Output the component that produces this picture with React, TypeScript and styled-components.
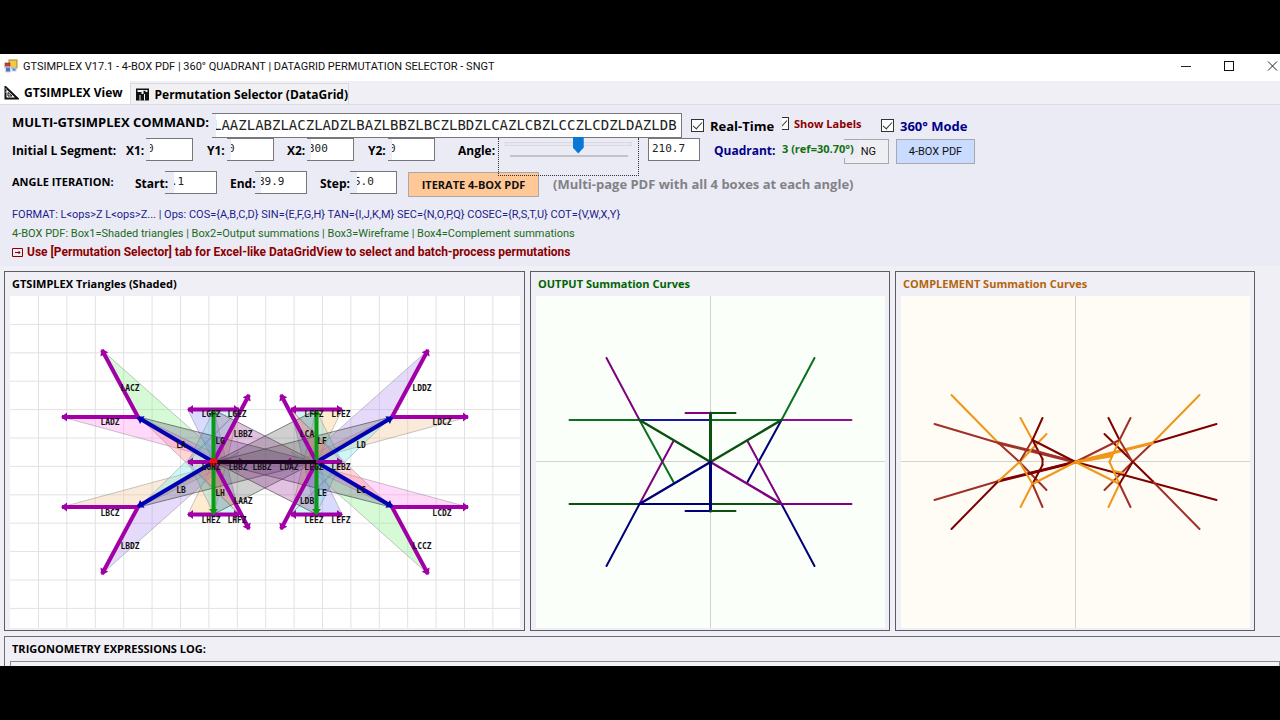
import React from "react";
import styled, { createGlobalStyle } from "styled-components";

const sans = `"Open Sans", "Noto Sans", sans-serif`;
const narrow = `Roboto, "Open Sans", sans-serif`;
const mono = `"DejaVu Sans Mono", "Liberation Mono", monospace`;
const panelBg = "#ebebf5";

const Global = createGlobalStyle`
  * { box-sizing: border-box; }
  body { margin: 0; background: #000; font-family: ${sans}; color: #000; }
  h1, h2, p { margin: 0; font-weight: inherit; font-size: inherit; }
`;

const Stage = styled.div`
  height: 100vh;
  padding: 54px 0;
  display: flex;
  overflow: hidden;
`;
const AppWindow = styled.main`
  flex: 1;
  min-width: 0;
  display: flex;
  flex-direction: column;
  background: #f0eff6;
  overflow: hidden;
  white-space: nowrap;
`;
const TitleBar = styled.header`
  flex: none;
  height: 27px;
  display: flex;
  align-items: center;
  gap: 5px;
  padding: 0 0 3px 4px;
  background: #fff;
  font: 11px ${narrow};
`;
const Title = styled.h1`
  flex: 1;
  color: #111;
`;
const WindowButtons = styled.div`
  display: flex;
  gap: 27px;
`;
const WindowButton = styled.button`
  width: 16px;
  height: 16px;
  padding: 0;
  border: 0;
  background: none;
  display: block;
`;
const Tabs = styled.nav`
  flex: none;
  height: 24px;
  display: flex;
  align-items: flex-end;
  border-bottom: 1px solid #dcdce2;
`;
const Tab = styled.button<{ $active?: boolean }>`
  height: ${(p) => (p.$active ? 23 : 21)}px;
  display: flex;
  align-items: center;
  gap: 5px;
  padding: 0 ${(p) => (p.$active ? 7 : 0)}px 0 4px;
  border: solid #dcdce0;
  border-width: ${(p) => (p.$active ? "0" : "1px 1px 0")};
  background: ${(p) => (p.$active ? "#fff" : "#f1f1f3")};
  font: bold 12px ${sans};
  color: #000;
`;
const Controls = styled.section`
  flex: none;
  padding: 0 0 4px 12px;
  background: ${panelBg};
`;
const Row = styled.div<{ $cols: string }>`
  height: 33px;
  display: grid;
  grid-template-columns: ${(p) => p.$cols};
  align-items: start;
`;
const Label = styled.label<{ $color?: string; $small?: boolean }>`
  position: relative;
  z-index: 1;
  font-weight: bold;
  font-size: ${(p) => (p.$small ? 11 : 12)}px;
  line-height: ${(p) => (p.$small ? 22 : 26)}px;
  color: ${(p) => p.$color || "#000"};
`;
const CommandLabel = styled(Label)`
  font-size: 13px;
  align-self: center;
`;
const Note = styled.span`
  font-weight: bold;
  font-size: 13px;
  line-height: 26px;
  color: #828286;
`;
const TextInput = styled.input<{ $cut?: number; $whole?: boolean }>`
  width: 100%;
  height: 23px;
  padding: 0 0 2px ${(p) => p.$cut || 3}px;
  border: 1px solid #77777b;
  border-left-width: ${(p) => (p.$whole ? 1 : 0)}px;
  border-radius: 0;
  outline: 0;
  background: linear-gradient(
    to right,
    ${panelBg} ${(p) => p.$cut || 0}px,
    #fff ${(p) => p.$cut || 0}px
  );
  text-indent: ${(p) => (p.$cut ? -3 : 0)}px;
  font: 11px ${mono};
  color: #222;
`;
const CommandInput = styled(TextInput)`
  align-self: end;
  height: 25px;
  padding-bottom: 2px;
  font-size: 14px;
`;
const Check = styled.label<{ $color?: string; $small?: boolean }>`
  height: ${(p) => (p.$small ? 29 : 25)}px;
  align-self: end;
  display: flex;
  align-items: center;
  gap: ${(p) => (p.$small ? 5 : 6)}px;
  font-weight: bold;
  font-size: ${(p) => (p.$small ? 11 : 13)}px;
  color: ${(p) => p.$color || "#000"};
`;
const Box = styled.input<{ $narrow?: boolean }>`
  appearance: none;
  flex: none;
  width: ${(p) => (p.$narrow ? 7 : 13)}px;
  height: 13px;
  margin: 0;
  border: 1px solid #333;
  border-left-width: ${(p) => (p.$narrow ? 0 : 1)}px;
  background: #fff;
  display: flex;
  justify-content: flex-end;
  overflow: hidden;
  &:checked::after {
    content: "";
    flex: none;
    width: 4px;
    height: 8px;
    margin-right: 3px;
    border: solid #333;
    border-width: 0 1px 1px 0;
    transform: rotate(42deg);
  }
`;
const Button = styled.button<{ $bg: string; $bold?: boolean }>`
  width: 100%;
  height: 25px;
  margin-top: 1px;
  padding: 0;
  border: 1px solid #a9a9ad;
  background: ${(p) => p.$bg};
  font: ${(p) => (p.$bold ? `bold 11px ${sans}` : `11px ${narrow}`)};
  color: #111;
`;
const NgButton = styled(Button)`
  padding-right: 12px;
  text-align: right;
`;
const QuadrantValue = styled.output`
  position: relative;
  z-index: 1;
  justify-self: start;
  width: 76px;
  margin-top: 2px;
  background: ${panelBg};
  font-weight: bold;
  font-size: 11px;
  line-height: 18px;
  color: #117011;
`;
const SliderBox = styled.div`
  position: relative;
  z-index: 1;
  height: 38px;
  padding: 0 6px;
  border: 1px dotted #333;
  border-top: 0;
  display: flex;
  flex-direction: column;
  align-items: center;
`;
const Slider = styled.input`
  appearance: none;
  width: 100%;
  height: 16px;
  margin: 0;
  background: none;
  &::-webkit-slider-runnable-track {
    height: 4px;
    margin-bottom: 5px;
    border: 1px solid #d9d9df;
    background: #e8e8ee;
  }
  &::-webkit-slider-thumb {
    appearance: none;
    width: 11px;
    height: 17px;
    margin-top: -6px;
    background: #0a76d6;
    clip-path: polygon(0 0, 100% 0, 100% 65%, 50% 100%, 0 65%);
  }
`;
const Ticks = styled.div`
  width: 118px;
  height: 2px;
  margin-top: 1px;
  background: #c2c2c8;
`;
const HelpLines = styled.div`
  padding-top: 1px;
`;
const Help = styled.p<{ $color: string; $bold?: boolean }>`
  display: flex;
  align-items: center;
  gap: 4px;
  font-family: ${narrow};
  font-size: ${(p) => (p.$bold ? 12 : 11)}px;
  line-height: 19px;
  font-weight: ${(p) => (p.$bold ? "bold" : "normal")};
  color: ${(p) => p.$color};
`;
const Panels = styled.section`
  flex: none;
  display: grid;
  grid-template-columns: 521fr 360fr 360fr;
  gap: 5px;
  padding: 5px 25px 5px 4px;
`;
const Panel = styled.article`
  min-width: 0;
  padding: 0 4px 2px 5px;
  border: 1px solid #5c5c64;
`;
const PanelTitle = styled.h2<{ $color?: string }>`
  display: block;
  padding-left: 2px;
  font-weight: bold;
  font-size: 11px;
  line-height: 24px;
  color: ${(p) => p.$color || "#000"};
`;
const Canvas = styled.svg<{ $bg: string }>`
  display: block;
  width: 100%;
  height: 332px;
  background: ${(p) => p.$bg};
`;
const Log = styled.section`
  flex: none;
  margin-left: 4px;
  padding: 0 0 0 5px;
  border: solid #6c6c74;
  border-width: 1px 0 0 1px;
`;
const LogText = styled.textarea`
  display: block;
  width: 100%;
  height: 60px;
  border: 1px solid #8a8a90;
  border-radius: 0;
  background: #f3f3f5;
  resize: none;
`;

type Seg = [number, number, number, number, string, number?];

const Segs = ({ items }: { items: Seg[] }) => (
  <>
    {items.map(([x1, y1, x2, y2, c, w], i) => (
      <line key={i} x1={x1} y1={y1} x2={x2} y2={y2} stroke={c} strokeWidth={w || 2} />
    ))}
  </>
);

const PURPLE = "#a000a6";
const BLUE = "#0000b4";
const GREEN = "#0a9a14";

function Arrow({ x1, y1, x2, y2, color, both }: { x1: number; y1: number; x2: number; y2: number; color: string; both?: boolean }) {
  const a = (Math.atan2(y2 - y1, x2 - x1) * 180) / Math.PI;
  const head = "M1 0L-5 -4.5V4.5Z";
  return (
    <g fill={color}>
      <line x1={x1} y1={y1} x2={x2} y2={y2} stroke={color} strokeWidth={4} />
      <path d={head} transform={`translate(${x2} ${y2}) rotate(${a})`} />
      {both && <path d={head} transform={`translate(${x1} ${y1}) rotate(${a + 180})`} />}
    </g>
  );
}

const shades: [string, string][] = [
  ["-162,-111 -126,-45 -26,10", "#80f080"],
  ["-203,-45 -126,-45 -26,3", "#ff88f0"],
  ["-203,45 -126,45 -26,-3", "#ecc090"],
  ["-162,111 -126,45 -26,-10", "#b090f0"],
  ["-77,-52 -51,-52 -26,52", "#9090ff"],
  ["-77,52 -51,52 -26,-52", "#ffc470"],
  ["-26,-52 -51,-52 -77,0", "#70e0e0"],
  ["-26,52 -51,52 -77,0", "#70e0e0"],
  ["-51,0 -126,-45 -26,52", "#ff8080"],
  ["-51,0 -126,45 -26,-52", "#70e8e8"],
];
const darkShades: [string, string][] = [
  ["-51,0 -126,-45 51,0", "#604880"],
  ["-51,0 -126,45 51,0", "#606060"],
  ["-51,0 -51,-52 51,0", "#902090"],
  ["-51,0 -51,52 51,0", "#505050"],
];

const labels: [number, number, string][] = [
  [-135, -74, "LACZ"], [-155, -40, "LADZ"], [-84, -17, "LA"], [-84, 28, "LB"],
  [-155, 51, "LBCZ"], [-135, 84, "LBDZ"], [-54, -48, "LGFZ"], [-28, -48, "LGEZ"],
  [-22, -28, "LBBZ"], [-45, -21, "LG"], [-45, 31, "LH"], [-22, 39, "LAAZ"],
  [-54, 58, "LHEZ"], [-28, 58, "LHFZ"], [-54, 5, "LGHZ"], [-27, 5, "LBBZ"],
  [-3, 5, "LBBZ"], [24, 5, "LDAZ"], [49, 5, "LEGZ"], [76, 5, "LEBZ"],
  [49, -48, "LFFZ"], [76, -48, "LFEZ"], [42, -28, "LCA"], [57, -21, "LF"],
  [96, -17, "LD"], [157, -74, "LDDZ"], [177, -40, "LDCZ"], [96, 28, "LC"],
  [177, 51, "LCDZ"], [157, 84, "LCCZ"], [57, 31, "LE"], [42, 39, "LDB"],
  [49, 58, "LEEZ"], [76, 58, "LEFZ"],
];

const half = (s: 1 | -1) => {
  const o = 51.5 * s;
  return (
    <React.Fragment key={s}>
      {[-1, 1].map((v) => (
        <React.Fragment key={v}>
          <Arrow x1={127 * s} y1={45 * v} x2={163 * s} y2={112 * v} color={PURPLE} />
          <Arrow x1={127 * s} y1={45 * v} x2={203 * s} y2={45 * v} color={PURPLE} />
          <Arrow x1={77 * s} y1={52.5 * v} x2={26 * s} y2={52.5 * v} color={PURPLE} both />
          <Arrow x1={o} y1={0} x2={16 * s} y2={67 * v} color={PURPLE} />
          <Arrow x1={o} y1={0} x2={127 * s} y2={44.5 * v} color={BLUE} />
          <Arrow x1={o} y1={0} x2={o} y2={52 * v} color={GREEN} />
        </React.Fragment>
      ))}
      <Arrow x1={o} y1={0} x2={77 * s} y2={0} color={PURPLE} />
      <Arrow x1={o} y1={0} x2={21 * s} y2={0} color={PURPLE} />
    </React.Fragment>
  );
};

const steps = (from: number, n: number) => Array.from({ length: n }, (_, i) => from + i * 28.4);

const Triangles = () => (
  <Canvas $bg="#fff" viewBox="-255 -166 510 332" preserveAspectRatio="xMidYMid slice">
    <g stroke="#e2e2e2" strokeWidth="1">
      {steps(-226.5, 17).map((x) => <line key={x} x1={x} x2={x} y1={-166} y2={166} />)}
      {steps(-137.6, 11).map((y) => <line key={y} x1={-255} x2={255} y1={y} y2={y} />)}
    </g>
    {[1, -1].map((s) => (
      <g key={s} transform={s === -1 ? "rotate(180)" : undefined}>
        {shades.map(([p, c]) => (
          <polygon key={p} points={p} fill={c} fillOpacity="0.33" stroke="#888" strokeOpacity="0.6" strokeWidth="0.8" />
        ))}
        {darkShades.map(([p, c]) => (
          <polygon key={p} points={p} fill={c} fillOpacity="0.27" stroke="#444" strokeOpacity="0.8" strokeWidth="0.8" />
        ))}
      </g>
    ))}
    {half(-1)}
    {half(1)}
    <line x1={-51} y1={0} x2={51} y2={0} stroke="#1c0020" strokeWidth="4" />
    <circle cx={-51.5} cy={0} r={4} fill="#f01010" />
    <g fontFamily="DejaVu Sans Mono, monospace" fontSize="8" fontWeight="bold" textAnchor="middle" fill="#111">
      {labels.map(([x, y, t], i) => <text key={i} x={x} y={y + 3}>{t}</text>)}
    </g>
  </Canvas>
);

const DG = "#0a500f", G = "#0a7020", N = "#000078", P = "#800080";
const output: Seg[] = [
  [-104, -104, -71, -42, P], [-141, -42, -71, -42, G], [-71, -42, 0, -42, "#1818a0"], [0, -42, 71, -42, G],
  [71, -42, 141, -42, "#901090"], [-141, 42, -71, 42, DG], [-71, 42, 0, 42, N], [0, 42, 71, 42, DG],
  [71, 42, 141, 42, P], [-71, -42, -37, 20, G], [-71, 42, -37, -21, P], [-71, 42, -104, 104, N],
  [71, -42, 104, -104, G], [71, -42, 37, 20, N], [71, 42, 37, -21, P], [71, 42, 104, 104, N],
  [0, 0, -71, -42, DG, 2.5], [0, 0, 71, -42, DG, 2.5], [0, 0, -71, 42, N, 2.5], [0, 0, 71, 42, P, 2.5],
  [0, -49, 0, 0, DG, 3], [0, 0, 0, 49, N, 3],
  [-25, -49, 0, -49, P], [0, -49, 25, -49, DG], [-25, 49, 0, 49, N], [0, 49, 25, 49, DG],
];

const M = "#800000", B = "#a03028", O = "#f09618";
const complement: Seg[] = [
  [-124, -67, -77, -19, O], [-77, -19, -56, 0, B], [-56, 0, -29, 28, B], [-141, -38, -77, -19, B],
  [-77, -19, 0, 0, B, 3], [-141, 38, -77, 19, B], [-77, 19, 0, 0, M, 3], [-124, 67, -77, 19, M],
  [-77, 19, -56, 0, O], [-56, 0, -29, -28, O], [-55, -44, -43, -22, O], [-43, -22, -33, -3, M],
  [-43, -12, 0, 0, B], [-45, 11, 0, 0, M],
  [-33, -3, -33, 3, M], [-33, 3, -43, 22, M], [-33, -44, -43, -22, M], [-43, -22, -56, 0, B],
  [-43, -22, 0, 0, M], [-43, 22, 0, 0, O], [-55, 45, -43, 22, O], [-33, 45, -43, 22, B], [-43, 22, -56, 0, O],
  [124, -67, 77, -19, O], [77, -19, 57, 0, B], [57, 0, 29, 28, B], [141, -38, 77, -19, M],
  [77, -19, 0, 0, O, 3], [141, 38, 0, 0, M], [48, 11, 38, 9, O], [124, 67, 77, 19, B], [77, 19, 29, -28, M],
  [33, -44, 44, -22, M], [44, -22, 57, 0, B], [55, -44, 44, -22, B], [44, -22, 34, 0, O], [34, 0, 44, 22, O],
  [44, -22, 0, 0, B], [35, -6, 0, 0, O, 3], [44, 22, 0, 0, O], [33, 45, 44, 22, O], [55, 45, 44, 22, B], [44, 22, 57, 0, M],
];

const Curves = ({ bg, items }: { bg: string; items: Seg[] }) => (
  <Canvas $bg={bg} viewBox="-175 -166 350 332" preserveAspectRatio="xMidYMid slice">
    <path d="M0 -166V166M-175 -0.5H175" stroke="#d3d3d0" />
    <g strokeLinecap="round"><Segs items={items} /></g>
  </Canvas>
);

const Field = ({ id, label, value, cut = 4 }: { id: string; label: string; value: string; cut?: number }) => (
  <>
    <Label htmlFor={id}>{label}</Label>
    <TextInput id={id} defaultValue={value} $cut={cut} />
    <span />
  </>
);

export default function App() {
  return (
    <Stage>
      <Global />
      <AppWindow>
        <TitleBar>
          <svg width="14" height="14" viewBox="0 0 14 14">
            <rect x="5" y="1" width="8" height="8" fill="#f4c84a" stroke="#a88420" />
            <rect x="1" y="4" width="5" height="5" fill="#c8402c" stroke="#8a2818" strokeWidth=".6" />
            <rect x="1.5" y="8" width="5" height="5" fill="#4a78c8" stroke="#d0d8ec" />
            <rect x="8" y="9" width="4" height="3" fill="#4a86dc" stroke="#c8d4ec" />
          </svg>
          <Title>GTSIMPLEX V17.1 - 4-BOX PDF | 360° QUADRANT | DATAGRID PERMUTATION SELECTOR - SNGT</Title>
          <WindowButtons>
            <WindowButton aria-label="Minimize">
              <svg width="16" height="16" viewBox="0 0 16 16"><path d="M3 8.5H13" stroke="#222" /></svg>
            </WindowButton>
            <WindowButton aria-label="Maximize">
              <svg width="16" height="16" viewBox="0 0 16 16"><rect x="3.5" y="3.5" width="9" height="9" fill="none" stroke="#111" /></svg>
            </WindowButton>
            <WindowButton aria-label="Close">
              <svg width="16" height="16" viewBox="0 0 16 16"><path d="M4 3.5L13 12.5M13 3.5L4 12.5" stroke="#222" /></svg>
            </WindowButton>
          </WindowButtons>
        </TitleBar>
        <Tabs>
          <Tab $active>
            <svg width="15" height="14" viewBox="0 0 15 14">
              <path d="M1.5 1V12.5H13.5Z" fill="none" stroke="#111" strokeWidth="2" />
              <path d="M4 6.5V10H8Z" fill="none" stroke="#111" />
              <path d="M1 3H3M1 6H3" stroke="#fff" strokeWidth=".6" />
            </svg>
            GTSIMPLEX View
          </Tab>
          <Tab>
            <svg width="15" height="14" viewBox="0 0 15 14">
              <path d="M1 1.500H14V13.500H1Z" fill="#111" />
              <path d="M2.500 3H12.500V5H10.500V3.800H8.500V7H6.500V5H2.500Z" fill="#f1f1f3" />
              <path d="M5 13.500V8M9.500 13.500V7" stroke="#f1f1f3" />
            </svg>
            Permutation Selector (DataGrid)
          </Tab>
        </Tabs>
        <Controls>
          <Row $cols="200px 470px 9px 91px 99px auto">
            <CommandLabel htmlFor="cmd">MULTI-GTSIMPLEX COMMAND:</CommandLabel>
            <CommandInput id="cmd" $cut={4} defaultValue="LAAZLABZLACZLADZLBAZLBBZLBCZLBDZLCAZLCBZLCCZLCDZLDAZLDB" />
            <span />
            <Check><Box type="checkbox" defaultChecked />Real-Time</Check>
            <Check $small $color="#8b0000"><Box type="checkbox" defaultChecked $narrow />Show Labels</Check>
            <Check $color="#00008b"><Box type="checkbox" defaultChecked />360° Mode</Check>
          </Row>
          <Row $cols="114px 20px 47px 14px 20px 47px 13px 20px 47px 14px 20px 47px 23px 40px 141px 9px 52px 14px 68px 62px 45px 7px 79px">
            <Label as="span">Initial L Segment:</Label>
            <Field id="x1" label="X1:" value="0" />
            <Field id="y1" label="Y1:" value="0" />
            <Field id="x2" label="X2:" value="300" />
            <Field id="y2" label="Y2:" value="0" />
            <Label htmlFor="angle">Angle:</Label>
            <SliderBox>
              <Slider id="angle" type="range" min="0" max="360" step="0.1" defaultValue="210.7" />
              <Ticks />
            </SliderBox>
            <span />
            <TextInput aria-label="Angle value" defaultValue="210.7" $whole />
            <span />
            <Label as="span" $color="#00008b">Quadrant:</Label>
            <QuadrantValue>3 (ref=30.70°)</QuadrantValue>
            <NgButton $bg="#efeff3">NG</NgButton>
            <span />
            <Button $bg="#c9dcff">4-BOX PDF</Button>
          </Row>
          <Row $cols="123px 30px 52px 13px 25px 52px 13px 30px 47px 11px 131px 14px auto">
            <Label as="span" $small>ANGLE ITERATION:</Label>
            <Field id="start" label="Start:" value=".1" cut={9} />
            <Field id="end" label="End:" value="89.9" cut={6} />
            <Field id="step" label="Step:" value="5.0" cut={7} />
            <Button $bg="#ffc896" $bold>ITERATE 4-BOX PDF</Button>
            <span />
            <Note>(Multi-page PDF with all 4 boxes at each angle)</Note>
          </Row>
          <HelpLines>
            <Help $color="#1c1c8c">{"FORMAT: L<ops>Z L<ops>Z... | Ops: COS={A,B,C,D} SIN={E,F,G,H} TAN={I,J,K,M} SEC={N,O,P,Q} COSEC={R,S,T,U} COT={V,W,X,Y}"}</Help>
            <Help $color="#1a6a1a">4-BOX PDF: Box1=Shaded triangles | Box2=Output summations | Box3=Wireframe | Box4=Complement summations</Help>
            <Help $color="#8b0000" $bold>
              <svg width="11" height="11" viewBox="0 0 11 11"><path d="M.5 1.5H10.5V9.5H.5ZM3 5.5H8M6.5 4L8 5.5L6.5 7" fill="none" stroke="#8b0000" /></svg>
              Use [Permutation Selector] tab for Excel-like DataGridView to select and batch-process permutations
            </Help>
          </HelpLines>
        </Controls>
        <Panels>
          <Panel>
            <PanelTitle>GTSIMPLEX Triangles (Shaded)</PanelTitle>
            <Triangles />
          </Panel>
          <Panel>
            <PanelTitle $color="#006400">OUTPUT Summation Curves</PanelTitle>
            <Curves bg="#fafffa" items={output} />
          </Panel>
          <Panel>
            <PanelTitle $color="#b4640a">COMPLEMENT Summation Curves</PanelTitle>
            <Curves bg="#fffcf5" items={complement} />
          </Panel>
        </Panels>
        <Log>
          <PanelTitle as="label" htmlFor="log">TRIGONOMETRY EXPRESSIONS LOG:</PanelTitle>
          <LogText id="log" readOnly />
        </Log>
      </AppWindow>
    </Stage>
  );
}
